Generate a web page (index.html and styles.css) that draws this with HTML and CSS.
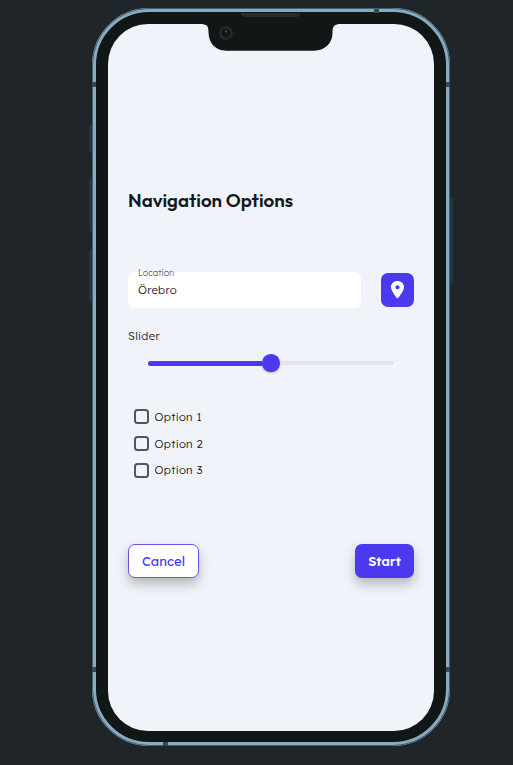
FILE: index.html
```html
<!DOCTYPE html>
<html lang="en">
<head>
<meta charset="utf-8">
<title>Navigation Options</title>
<link rel="stylesheet" href="styles.css">
</head>
<body>
<div class="phone">
  <i class="key key-mute"></i><i class="key key-up"></i><i class="key key-down"></i><i class="key key-power"></i>
  <i class="band band-top"></i><i class="band band-bottom"></i>
  <i class="band side left upper"></i><i class="band side right upper"></i>
  <i class="band side left lower"></i><i class="band side right lower"></i>
  <i class="speaker"></i>
  <svg class="notch" width="130" height="28" viewBox="0 0 130 28" aria-hidden="true">
    <path fill="#111616" d="M0 -.5V.4C4.500 .4 5.500 3 5.500 8C5.500 19.500 13 26.700 23 26.700H111C121.500 26.700 129.500 19.500 129.500 9V8C129.500 3 131 .4 135 .4V-.5Z"/>
    <circle cx="23" cy="9" r="5.700" fill="#111616" stroke="#262b2d" stroke-width="2.400"/>
    <circle cx="23" cy="7.500" r="1" fill="#596062"/>
  </svg>
  <main class="screen">
    <h1>Navigation Options</h1>
    <div class="location">
      <label class="field"><span class="caption">Location</span><span class="value">Örebro</span></label>
      <button class="pin" aria-label="Use my location">
        <svg width="13" height="18" viewBox="0 0 12 18" preserveAspectRatio="none"><path fill="#fff" fill-rule="evenodd" d="M6 0C2.600 0 0 2.700 0 6c0 4.300 6 11.700 6 11.700S12 10.300 12 6C12 2.700 9.400 0 6 0Zm0 4.200a2 2 0 1 1 0 4 2 2 0 0 1 0-4Z"/></svg>
      </button>
    </div>
    <div class="slider-label">Slider</div>
    <div class="slider"><div class="fill"></div><div class="thumb"></div><div class="rest"></div></div>
    <div class="options">
      <label class="option"><span class="box"></span><span>Option 1</span></label>
      <label class="option"><span class="box"></span><span>Option 2</span></label>
      <label class="option"><span class="box"></span><span>Option 3</span></label>
    </div>
    <div class="actions">
      <button class="btn cancel"><span>Cancel</span></button>
      <button class="btn start"><span>Start</span></button>
    </div>
  </main>
</div>
</body>
</html>
```
FILE: styles.css
```css
* { box-sizing: border-box; }
body { margin: 0; padding: 8px 63px 0 92px; height: 765px; overflow: hidden; background: #202529; font-family: Lexend, Inter, sans-serif; color: #14181b; }
.phone { position: relative; width: 358px; height: 738px; padding: 12px; border: 4px solid #89abc1; border-radius: 57px; background: #111616; }
.phone::before { content: ""; position: absolute; inset: -4px; border: 1px solid #43606f; border-radius: 57px; }
.screen { display: flex; flex-direction: column; width: 326px; height: 707px; padding: 165px 20px 0; border-radius: 40px; background: #f0f3f9; }
.key { position: absolute; left: -7px; width: 3px; background: #203442; border-radius: 2px 0 0 2px; }
.key-mute { top: 113px; height: 28px; }
.key-up { top: 166px; height: 54px; }
.key-down { top: 237px; height: 53px; }
.key-power { left: 354px; top: 185px; height: 87px; border-radius: 0 2px 2px 0; }
.band { position: absolute; z-index: 1; width: 5px; height: 4px; background: #39484f; }
.band-top { left: 278px; top: -3px; }
.band-bottom { left: 67px; bottom: -4px; }
.side { width: 4px; height: 5px; }
.left { left: -4px; }
.right { right: -4px; }
.upper { top: 70px; }
.lower { top: 655px; }
.speaker { position: absolute; left: 145px; top: 1px; width: 59px; height: 4px; border-radius: 0 0 4px 4px; background: #262b2d; }
.notch { position: absolute; left: 107px; top: 12px; overflow: visible; }
h1 { margin: 0; height: 22px; font: 600 18.750px/22px Outfit, Lato, sans-serif; white-space: nowrap; }
.location { display: flex; justify-content: space-between; align-items: center; height: 36px; margin-top: 61px; }
.field { position: relative; width: 233px; height: 35.500px; padding: 10px 10px 0; border-radius: 7px; background: #fff; font-size: 11.400px; font-weight: 300; line-height: 16px; letter-spacing: .25px; }
.caption { position: absolute; left: 10px; top: -6px; font-size: 8.800px; line-height: 13px; color: #57636c; letter-spacing: 0; }
button { margin: 0; padding: 0; border: 0; display: flex; align-items: center; justify-content: center; font-family: inherit; }
.pin { width: 33.500px; height: 33.500px; border-radius: 7px; background: #4b39ef; }
.slider-label { margin-top: 20px; font-size: 11.400px; font-weight: 300; line-height: 16px; letter-spacing: .3px; }
.slider { display: flex; align-items: center; height: 18px; margin: 10px 20px 0; }
.fill { width: 114px; height: 5px; border-radius: 3px 0 0 3px; background: #4b39ef; }
.thumb { width: 17.500px; height: 17.500px; border-radius: 50%; background: #4b39ef; box-shadow: 0 1px 2px #0004; }
.rest { flex: 1; height: 4px; border-radius: 0 2px 2px 0; background: #e0e3e7; }
.options { margin: 31.500px 0 0 6px; display: flex; flex-direction: column; }
.option { display: flex; align-items: center; gap: 5.500px; height: 26.700px; font-size: 11.400px; font-weight: 300; letter-spacing: .3px; }
.box { width: 15px; height: 15px; border: 2px solid #57535a; border-radius: 3.500px; }
.actions { display: flex; justify-content: space-between; margin-top: 60px; }
.btn { height: 34px; border-radius: 7px; font-size: 13.200px; box-shadow: 0 6px 12px #00000040; }
.btn span { position: relative; top: .5px; }
.cancel { width: 71px; border: 1px solid #6354ed; background: #fff; color: #4b39ef; font-weight: 400; }
.start { width: 59px; background: #4b39ef; color: #fff; font-size: 12.900px; font-weight: 600; }
```
